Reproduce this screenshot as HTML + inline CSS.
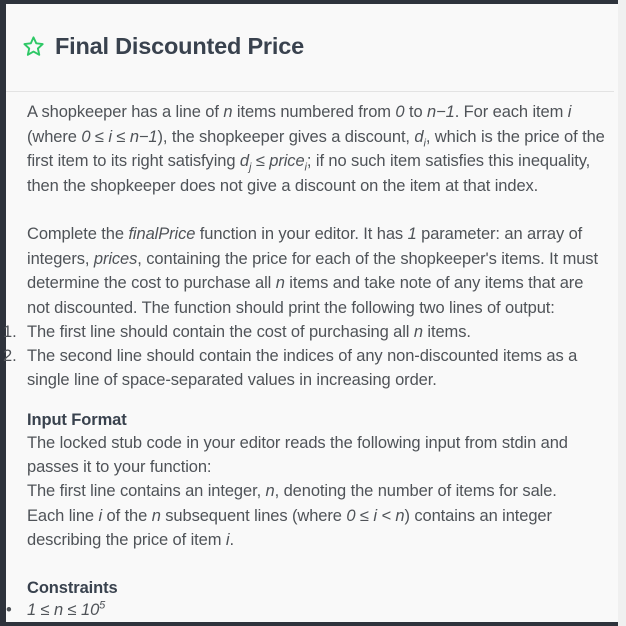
<!DOCTYPE html>
<html><head><meta charset="utf-8"><style>
html,body{margin:0;padding:0;width:626px;height:626px;overflow:hidden;background:#2e333c;}
.panel{position:absolute;left:6px;top:4px;width:612px;height:618px;background:#f9f9f9;}
.hdr{position:absolute;left:0;top:0;width:608px;height:87px;border-bottom:1px solid #e3e3e3;}
.title{position:absolute;left:49px;top:29px;font:bold 23.5px "Liberation Sans",sans-serif;color:#39424e;letter-spacing:-0.2px;}
.r{position:absolute;right:0;top:0;width:8px;height:626px;background:#f0f0f0;}
.l{position:absolute;left:21px;font:16.5px "Liberation Sans",sans-serif;color:#4f5358;white-space:nowrap;letter-spacing:-0.1px;line-height:18px;}
.b{font-weight:bold;color:#39424e;}
i{font-style:italic;}
sub,sup{line-height:0;font-size:11px;}
.num{position:absolute;left:-6px;}
</style></head><body>
<div class="r"></div>
<div class="panel">
<div class="hdr">
<svg style="position:absolute;left:16px;top:31px" width="23" height="23" viewBox="0 0 24 24"><path d="M12 2.5l2.9 6.2 6.7.8-5 4.6 1.4 6.6L12 17.3l-5.9 3.4 1.4-6.6-5-4.6 6.7-.8z" fill="none" stroke="#2ec866" stroke-width="2" stroke-linejoin="round"/></svg>
<div class="title">Final Discounted Price</div>
</div>
<div class="l" style="top:99px">A shopkeeper has a line of <i>n</i> items numbered from <i>0</i> to <i>n−1</i>. For each item <i>i</i></div>
<div class="l" style="top:124px">(where <i>0 ≤ i ≤ n−1</i>), the shopkeeper gives a discount, <i>d<sub>i</sub></i>, which is the price of the</div>
<div class="l" style="top:148px">first item to its right satisfying <i>d<sub>j</sub> ≤ price<sub>i</sub></i>; if no such item satisfies this inequality,</div>
<div class="l" style="top:173px">then the shopkeeper does not give a discount on the item at that index.</div>
<div class="l" style="top:221px">Complete the <i>finalPrice</i> function in your editor. It has <i>1</i> parameter: an array of</div>
<div class="l" style="top:246px">integers, <i>prices</i>, containing the price for each of the shopkeeper's items. It must</div>
<div class="l" style="top:270px">determine the cost to purchase all <i>n</i> items and take note of any items that are</div>
<div class="l" style="top:295px">not discounted. The function should print the following two lines of output:</div>
<div class="l" style="top:319px"><span class="num" style="left:-24px">1.</span>The first line should contain the cost of purchasing all <i>n</i> items.</div>
<div class="l" style="top:343px"><span class="num" style="left:-24px">2.</span>The second line should contain the indices of any non-discounted items as a</div>
<div class="l" style="top:367px">single line of space-separated values in increasing order.</div>
<div class="l b" style="top:407px">Input Format</div>
<div class="l" style="top:430px">The locked stub code in your editor reads the following input from stdin and</div>
<div class="l" style="top:454px">passes it to your function:</div>
<div class="l" style="top:478px">The first line contains an integer, <i>n</i>, denoting the number of items for sale.</div>
<div class="l" style="top:503px">Each line <i>i</i> of the <i>n</i> subsequent lines (where <i>0 ≤ i &lt; n</i>) contains an integer</div>
<div class="l" style="top:527px">describing the price of item <i>i</i>.</div>
<div class="l b" style="top:575px">Constraints</div>
<div class="l" style="top:597px"><span class="num" style="left:-21px">•</span><i>1 ≤ n ≤ 10<sup>5</sup></i></div>
</div>
</body></html>
